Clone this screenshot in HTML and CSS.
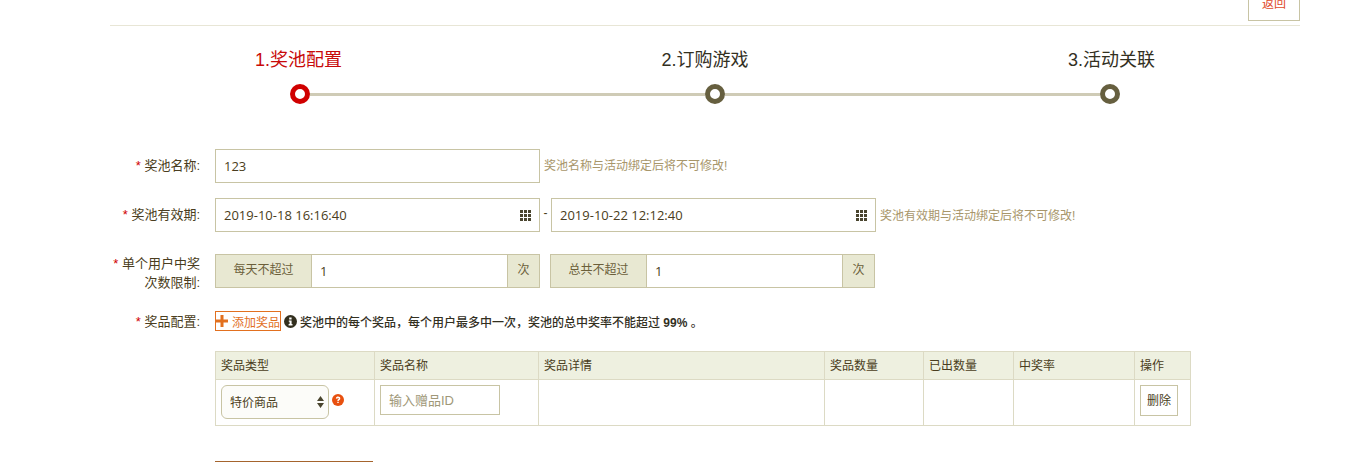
FILE: index.html
```html
<!DOCTYPE html>
<html lang="zh-CN">
<head>
<meta charset="utf-8">
<title>奖池配置</title>
<link rel="stylesheet" href="styles.css">
</head>
<body>
<main class="page">
  <div class="topbar"><a class="back-btn">返回</a></div>

  <div class="step-labels">
    <span class="step-label is-active">1.奖池配置</span>
    <span class="step-label">2.订购游戏</span>
    <span class="step-label">3.活动关联</span>
  </div>
  <div class="step-track">
    <span class="dot is-active"></span><span class="track-line track-first"></span>
    <span class="dot"></span><span class="track-line track-second"></span>
    <span class="dot"></span>
  </div>

  <form class="form">
    <div class="row row-name">
      <label class="label"><i>*</i> 奖池名称:</label>
      <input class="field field-wide" type="text" value="123">
      <span class="hint">奖池名称与活动绑定后将不可修改!</span>
    </div>

    <div class="row row-date">
      <label class="label"><i>*</i> 奖池有效期:</label>
      <div class="date-field">
        <input class="field field-date" type="text" value="2019-10-18 16:16:40">
        <svg class="grid-icon" width="11" height="11" viewBox="0 0 11 11"><path d="M0 0h3v3H0zM4 0h3v3H4zM8 0h3v3H8zM0 4h3v3H0zM4 4h3v3H4zM8 4h3v3H8zM0 8h3v3H0zM4 8h3v3H4zM8 8h3v3H8z"/></svg>
      </div>
      <span class="date-sep">-</span>
      <div class="date-field">
        <input class="field field-date" type="text" value="2019-10-22 12:12:40">
        <svg class="grid-icon" width="11" height="11" viewBox="0 0 11 11"><path d="M0 0h3v3H0zM4 0h3v3H4zM8 0h3v3H8zM0 4h3v3H0zM4 4h3v3H4zM8 4h3v3H8zM0 8h3v3H0zM4 8h3v3H4zM8 8h3v3H8z"/></svg>
      </div>
      <span class="hint">奖池有效期与活动绑定后将不可修改!</span>
    </div>

    <div class="row row-limit">
      <label class="label"><i>*</i> 单个用户中奖<br>次数限制:</label>
      <div class="group">
        <span class="addon addon-lead">每天不超过</span>
        <input class="group-input" type="text" value="1">
        <span class="addon addon-tail">次</span>
      </div>
      <div class="group group-second">
        <span class="addon addon-lead">总共不超过</span>
        <input class="group-input" type="text" value="1">
        <span class="addon addon-tail">次</span>
      </div>
    </div>

    <div class="row row-prize">
      <label class="label"><i>*</i> 奖品配置:</label>
      <a class="add-btn">
        <svg width="12" height="12" viewBox="0 0 12 12"><path d="M4.5 0h3v4.500H12v3H7.500V12h-3V7.500H0v-3h4.500z"/></svg>
        添加奖品
      </a>
      <svg class="info-icon" width="13" height="13" viewBox="0 0 13 13"><circle cx="6.5" cy="6.5" r="6.5"/><path d="M5.2 2.5h2.4v2H5.2zM4.8 5.4h2.8v3.6h.9v1.4H4.6V9h1V6.8h-.8z" fill="#fff"/></svg>
      <span class="notice">奖池中的每个奖品，每个用户最多中一次，奖池的总中奖率不能超过 <b>99%</b> 。</span>
    </div>

    <table class="prize-table">
      <colgroup>
        <col class="c1"><col class="c2"><col class="c3"><col class="c4"><col class="c5"><col class="c6"><col class="c7">
      </colgroup>
      <thead>
        <tr><th>奖品类型</th><th>奖品名称</th><th>奖品详情</th><th>奖品数量</th><th>已出数量</th><th>中奖率</th><th>操作</th></tr>
      </thead>
      <tbody>
        <tr>
          <td>
            <div class="type-cell">
              <div class="select-box">特价商品
                <svg class="select-arrows" width="7" height="12" viewBox="0 0 7 12"><path d="M3.5 0L7 5H0zM3.500 12L0 7h7z"/></svg>
              </div>
              <svg class="help-icon" width="12" height="12" viewBox="0 0 12 12"><circle cx="6" cy="6" r="6"/><path d="M3.8 4.4C4 3.1 5 2.6 6.1 2.6c1.3 0 2.2.7 2.2 1.8 0 1.500-1.600 1.500-1.600 2.600H5.300c0-1.800 1.500-1.800 1.500-2.500 0-.4-.3-.6-.7-.6-.5 0-.8.3-.9.8zM5.300 7.700h1.400v1.400H5.300z" fill="#fff"/></svg>
            </div>
          </td>
          <td><input class="gift-input" type="text" placeholder="输入赠品ID"></td>
          <td></td><td></td><td></td><td></td>
          <td><a class="del-btn">删除</a></td>
        </tr>
      </tbody>
    </table>

    <div class="submit-edge"></div>
  </form>
</main>
</body>
</html>
```

FILE: styles.css
```css
html, body {
  margin: 0;
  height: 462px;
  overflow: hidden;
  background: #fff;
}
body {
  font-family: "Liberation Sans", "Noto Sans CJK SC", sans-serif;
  font-size: 12px;
  color: #4a3d20;
}
.page {
  width: 1190px;
  margin-left: 110px;
}
.topbar {
  display: flex;
  justify-content: flex-end;
  height: 25px;
  border-bottom: 1px solid #e8e6d6;
}
.back-btn {
  width: 50px;
  height: 29px;
  margin-top: -10px;
  border: 1px solid #c8c4a4;
  color: #e0492a;
  font-size: 12px;
  line-height: 26px;
  text-align: center;
}
.step-labels {
  display: flex;
  justify-content: space-between;
  width: 900px;
  margin: 24px 0 0 145px;
  height: 20px;
  line-height: 20px;
}
.step-label {
  font-size: 18px;
  color: #33301f;
}
.step-label.is-active { color: #c80a0a; }
.step-track {
  display: flex;
  align-items: center;
  height: 20px;
  margin: 14px 0 0 180px;
}
.dot {
  box-sizing: border-box;
  flex: none;
  width: 20px;
  height: 20px;
  border: 5px solid #665f3f;
  border-radius: 50%;
  background: #fff;
}
.dot.is-active { border-color: #d00000; }
.track-line {
  flex: none;
  height: 3px;
  background: #cfcbb6;
}
.track-first { width: 395px; }
.track-second { width: 375px; }
.form { margin-top: 45px; }
.row {
  display: flex;
  align-items: center;
}
.row-date, .row-limit { height: 34px; }
.row-name { height: 34px; }
.row-date { margin-top: 15px; }
.row-limit { margin-top: 22px; }
.row-prize { height: 20px; margin-top: 23px; }
.label {
  flex: none;
  width: 90px;
  margin-right: 15px;
  font-size: 13px;
  line-height: 19px;
  text-align: right;
  color: #4a3d20;
}
.row-name .label, .row-date .label { padding-bottom: 2px; }
.row-limit .label { padding-top: 3px; }
.label i {
  font-style: normal;
  color: #d00000;
}
.field {
  box-sizing: border-box;
  height: 34px;
  padding: 0 8px;
  border: 1px solid #c8c4a4;
  border-radius: 0;
  outline: 0;
  background: #fff;
  font-family: "Open Sans", "Noto Sans CJK SC", sans-serif;
  font-size: 13px;
  color: #4a3d20;
}
.field-wide { width: 325px; }
.hint {
  margin-left: 4px;
  font-size: 12px;
  color: #a8966a;
}
.row-name .hint { padding-bottom: 4px; }
.row-date .hint { padding-bottom: 2px; }
.date-field {
  position: relative;
  display: flex;
  width: 325px;
}
.field-date { width: 100%; }
.grid-icon {
  position: absolute;
  top: 12px;
  right: 9px;
  fill: #4a452f;
}
.date-sep {
  width: 11px;
  text-align: center;
  line-height: 30px;
  height: 34px;
}
.group {
  box-sizing: border-box;
  display: flex;
  width: 325px;
  height: 34px;
  border: 1px solid #c8c4a4;
}
.group-second { margin-left: 10px; }
.addon {
  flex: none;
  background: #e8e8d2;
  color: #6b5f3a;
  text-align: center;
  line-height: 30px;
}
.addon-lead {
  width: 95px;
  border-right: 1px solid #c8c4a4;
}
.addon-tail {
  width: 31px;
  border-left: 1px solid #c8c4a4;
}
.group-input {
  box-sizing: border-box;
  flex: 1;
  min-width: 0;
  padding: 0 8px;
  border: 0;
  outline: 0;
  font-family: "Open Sans", "Noto Sans CJK SC", sans-serif;
  font-size: 13px;
  color: #4a3d20;
}
.add-btn {
  box-sizing: border-box;
  display: flex;
  align-items: center;
  gap: 4px;
  width: 66px;
  height: 20px;
  border: 1px solid #e2701f;
  color: #e2701f;
  white-space: nowrap;
}
.add-btn svg {
  flex: none;
  fill: #e2701f;
}
.info-icon {
  flex: none;
  margin-left: 3px;
  fill: #33301f;
}
.notice {
  margin-left: 3px;
  font-weight: 500;
  color: #33301f;
}
.prize-table {
  width: 975px;
  margin: 20px 0 0 105px;
  border-collapse: collapse;
  table-layout: fixed;
}
.c1 { width: 159px; }
.c2 { width: 164px; }
.c3 { width: 286px; }
.c4 { width: 99px; }
.c5 { width: 90px; }
.c6 { width: 121px; }
.c7 { width: 56px; }
.prize-table th, .prize-table td {
  box-sizing: border-box;
  padding: 0 5px;
  border: 1px solid #dcdac4;
  font-weight: 400;
  text-align: left;
  color: #4a3d20;
}
.prize-table th {
  height: 28px;
  padding-bottom: 2px;
  background: #eef0e0;
}
.prize-table td {
  height: 46px;
  padding-top: 5px;
  padding-bottom: 5px;
  vertical-align: top;
}
.type-cell {
  display: flex;
  align-items: flex-start;
}
.select-box {
  position: relative;
  box-sizing: border-box;
  width: 108px;
  height: 34px;
  padding-left: 8px;
  border: 1px solid #c8c4a4;
  border-radius: 6px;
  line-height: 34px;
  background: #fcfcf9;
}
.select-arrows {
  position: absolute;
  top: 10px;
  right: 4px;
  fill: #4a452f;
}
.help-icon {
  flex: none;
  margin: 9px 0 0 3px;
  fill: #e8500f;
}
.gift-input {
  box-sizing: border-box;
  display: block;
  width: 120px;
  height: 30px;
  padding: 0 8px;
  border: 1px solid #c8c4a4;
  border-radius: 0;
  outline: 0;
  font-family: "Liberation Sans", "Noto Sans CJK SC", sans-serif;
  font-size: 13px;
}
.gift-input::placeholder { color: #a09878; opacity: 1; }
.del-btn {
  box-sizing: border-box;
  display: block;
  width: 38px;
  height: 31px;
  border: 1px solid #c8c4a4;
  line-height: 31px;
  text-align: center;
  color: #4a3d20;
}
.submit-edge {
  width: 158px;
  height: 40px;
  margin: 35px 0 0 105px;
  border-top: 1px solid #a5642d;
}
```
